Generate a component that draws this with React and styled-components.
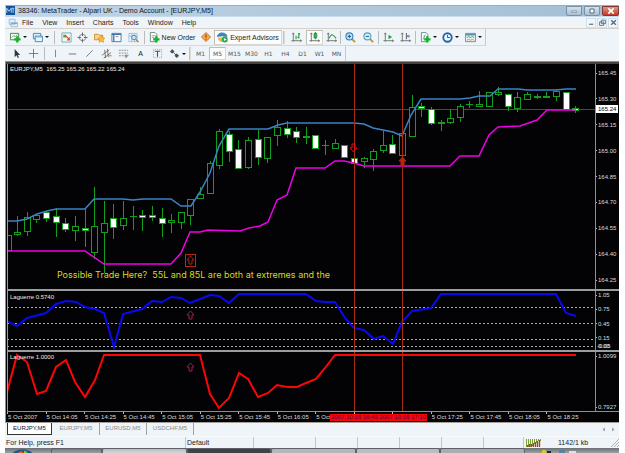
import React from "react";
import styled, { createGlobalStyle, css } from "styled-components";

const sans = `"Liberation Sans", Arial, sans-serif`;

const GlobalStyle = createGlobalStyle`
  * { box-sizing: border-box; }
  html { background: #fdfeff; }
  body { margin: 0; overflow: hidden; font-family: ${sans}; font-size: 7px; color: #1c1c1c; }
  button { font: inherit; color: inherit; border: 0; padding: 0; margin: 0; background: none; }
  a { color: inherit; text-decoration: none; }
  svg { display: block; }
`;

const AppWindow = styled.div`
  margin: 5px 6px 0 5px;
  background: #eff4f8;
`;

const TitleBar = styled.header`
  display: flex;
  align-items: center;
  height: 12px;
  padding-left: 1px;
  gap: 3px;
  background: linear-gradient(90deg, #c3d5e6, #b3cadd 45%, #a3bfd5);
  border-bottom: 1px solid #c6dcee;
  box-shadow: inset 0 1px #98aec1;
`;

const TitleText = styled.h1`
  flex: 1;
  margin: 0;
  font-size: 7px;
  line-height: 10px;
  font-weight: 400;
  white-space: nowrap;
  color: #101820;
`;

const Caption = styled.div`
  display: flex;
  gap: 2px;
`;

const CaptionButton = styled.button`
  display: grid;
  place-items: center;
  width: ${(p) => (p.$close ? 17 : 16)}px;
  height: 10px;
  border: 1px solid ${(p) => (p.$close ? "#7c3a33" : "#7890a4")};
  border-radius: 0 0 2px 2px;
  background: ${(p) => (p.$close ? "linear-gradient(#e0958a, #c43a26)" : "linear-gradient(#d3e1ed, #a9c0d3)")};
`;

const MenuBar = styled.nav`
  display: flex;
  align-items: center;
  height: 12px;
  padding-left: 3px;
  border-bottom: 1px solid #d6d1ca;
`;

const MenuList = styled.div`
  display: flex;
  flex: 1;
  gap: 9px;
  padding-left: 4px;
`;

const MenuItem = styled.button`
  font-size: 7px;
  line-height: 10px;
`;

const MdiControls = styled.div`
  display: flex;
  gap: 1px;
  padding-right: 1px;
`;

const MdiButton = styled.button`
  display: grid;
  place-items: center;
  width: 10px;
  height: 10px;
  border: 1px solid #d3dfe8;
  background: #f3f7fa;
`;

const Toolbar = styled.div`
  display: flex;
  align-items: center;
  width: fit-content;
  height: ${(p) => (p.$slim ? 15 : 17)}px;
  padding-left: 2px;
  border-right: 1px solid #cbc8c2;
  border-bottom: ${(p) => (p.$slim ? 0 : 1)}px solid #dcd8d1;
`;

const ToolButton = styled.button`
  display: flex;
  align-items: center;
  justify-content: center;
  gap: 2px;
  flex: none;
  width: ${(p) => p.$w || 17}px;
  height: ${(p) => (p.$period ? 13 : 15)}px;
  font-size: 7px;
  white-space: nowrap;
  ${(p) =>
    p.$period &&
    css`
      font-family: "DejaVu Sans", sans-serif;
      font-size: 6px;
      color: #55585c;
    `}
  ${(p) =>
    p.$pressed &&
    css`
      background: #fafcfd;
      border: 1px solid;
      border-color: #c0bdb8 #d8d6d2 #d8d6d2 #c0bdb8;
    `}
`;

const Caret = styled.span`
  border: 2px solid transparent;
  border-top-color: #111;
  border-bottom-width: 0;
`;

const Divider = styled.span`
  flex: none;
  width: 1px;
  height: 13px;
  margin: 0 ${(p) => p.$m ?? 2}px;
  background: #b9bcbf;
`;

const Grip = styled.span`
  flex: none;
  width: 2px;
  height: 13px;
  margin: 0 1px;
  border-left: 1px solid #c6c2bb;
  border-right: 1px solid #dedbd6;
`;

const ChartFrame = styled.main`
  background: #030205;
  border: solid #8c8f90;
  border-width: 1px 0 1px 1px;
  border-bottom-color: #a39f98;
  box-shadow: inset 0 2px #45413c;
  padding: 2px 0 0 1px;
`;

const Pane = styled.section`
  display: grid;
  grid-template-columns: minmax(0, 1fr) 24px;
  height: ${(p) => p.$h}px;
  position: relative;
  border-left: 1px solid #9a9c9c;
  border-bottom: ${(p) => (p.$last ? 1 : 2)}px solid ${(p) => (p.$last ? "#8d8f8f" : "#9a9d9d")};
`;

const Plot = styled.svg`
  width: 100%;
  height: 100%;
`;

const Scale = styled.div`
  display: flex;
  flex-direction: column;
  justify-content: space-between;
  border-left: 1px solid #8c8f8f;
  padding: ${(p) => p.$pad || "4px 0"};
  position: relative;
  font: 6px/8px ${sans};
  color: #dcdcdc;
`;

const ScaleValue = styled.span`
  display: flex;
  align-items: center;
  gap: 1px;
  height: 8px;
  &::before {
    content: "";
    width: 1px;
    height: 1px;
    background: #b8b8b8;
  }
`;

const PriceTag = styled.span`
  position: absolute;
  top: 41px;
  left: 0;
  right: 1px;
  padding-left: 2px;
  background: #fff;
  color: #000;
`;

const PaneLabel = styled.span`
  position: absolute;
  top: ${(p) => p.$top || 1}px;
  left: 2px;
  font: 6px/8px ${sans};
  color: #ececec;
  white-space: pre;
`;

const Note = styled.span`
  position: absolute;
  left: 8%;
  top: 205px;
  font: 9px/12px Inter, ${sans};
  color: #d9d916;
  white-space: pre;
`;

const TimeAxis = styled.div`
  display: grid;
  grid-template-columns: repeat(15, minmax(0, 1fr));
  position: relative;
  height: 10px;
  padding-right: 34px;
  font: 6px/9px ${sans};
  color: #dcdcdc;
`;

const TimeTick = styled.span`
  white-space: nowrap;
  padding: 1px 0 0 1px;
  background: linear-gradient(#b8b8b8, #b8b8b8) 0 0 / 1px 2px no-repeat;
`;

const TimeMarks = styled.span`
  position: absolute;
  left: 323px;
  top: 2px;
  display: flex;
  justify-content: space-between;
  width: 97px;
  padding: 0 1px;
  height: 7px;
  line-height: 7px;
  background: #f80505;
  color: #4a0a50;
  white-space: nowrap;
`;

const Tabs = styled.nav`
  display: flex;
  align-items: flex-start;
  height: 14px;
  padding-left: 2px;
  border-bottom: 1px solid #f8fbfd;
  color: #8b8b8b;
`;

const Tab = styled.a`
  width: ${(p) => (p.$active ? 45 : 47)}px;
  height: 12px;
  font: 6px/11px ${sans};
  text-align: center;
  border-right: 1px solid #a3a3a3;
  ${(p) =>
    p.$active &&
    css`
      color: #111;
      background: #fff;
      border: 1px solid #333;
      border-top: 0;
      margin-right: 1px;
    `}
`;

const TabArrows = styled.div`
  display: flex;
  gap: 5px;
  margin-left: auto;
  padding: 4px 3px 0 0;
`;

const StatusBar = styled.footer`
  display: flex;
  height: 11px;
  line-height: 10px;
`;

const StatusCell = styled.span`
  display: flex;
  align-items: center;
  flex: ${(p) => (p.$w ? "none" : "1")};
  width: ${(p) => (p.$w ? `${p.$w}px` : "auto")};
  padding-left: 1px;
  border-left: ${(p) => (p.$w ? 1 : 0)}px solid #c9c6c0;
  white-space: nowrap;
`;

const Traffic = styled.span`
  margin-left: 16px;
  flex: 1;
`;

const Taskbar = styled.div`
  display: flex;
  height: 6px;
  overflow: hidden;
  background: linear-gradient(#6c7073, #a6abae);
`;

const TaskSlot = styled.span`
  flex: ${(p) => p.$f};
  border: 1px solid #5d6163;
  border-radius: 2px 2px 0 0;
  background: ${(p) => p.$bg};
`;

/* ---------- icons ---------- */

const Icon = ({ children, size = 12 }) => (
  <svg width={size} height={size} viewBox="0 0 12 12" fill="none" aria-hidden="true">
    {children}
  </svg>
);

const Plus = ({ x, y }) => (
  <path d={`M${x} ${y - 3.5}v7M${x - 3.5} ${y}h7`} stroke="#17b02a" strokeWidth="2.6" />
);
const Axes = () => <path d="M2.5 1v9.5M0.5 9.5h11M1.5 2.5l1-1.5 1 1.5M10 8.5l1.5 1-1.5 1" stroke="#69706b" />;

const icons = {
  app: (
    <>
      <path d="M0 0h12v12H0z" fill="#12539a" />
      <path d="M1 9V3l3 4 3-4v6M8 3h3M9.500 3v6" stroke="#b9dcf7" strokeWidth="1.2" />
    </>
  ),
  doc: (
    <>
      <path d="M1.500 1.500h7v6h-7zM3.500 5.500h8v5h-8z" fill="#e4f1fb" stroke="#8fb7d6" />
      <path d="M4 6.500h7" stroke="#5f9ccc" />
    </>
  ),
  newChart: (
    <>
      <path d="M.5 1.500h9v7h-9z" fill="#f3faf3" stroke="#4d7d4c" />
      <path d="M2 6l2-2 2 1 2-2" stroke="#5aa257" />
      <Plus x={8} y={8} />
    </>
  ),
  profiles: (
    <>
      <path d="M1.500 1.500h8v6h-8z" fill="#d9ebf8" stroke="#4884b4" />
      <path d="M3.500 4.500h8v6h-8z" fill="#eaf5fc" stroke="#4884b4" />
      <path d="M4 5.500h7" stroke="#79aad0" />
    </>
  ),
  market: (
    <>
      <path d="M1 1h10v10H1z" fill="#f2f7ec" stroke="#79a6bd" />
      <path d="M2.500 3h3v3h-3z" fill="#3fa850" />
      <path d="M5 4l4 4M9 6v2.500H6.500" stroke="#d2502e" strokeWidth="1.400" />
    </>
  ),
  target: (
    <>
      <circle cx="6" cy="6" r="3.500" stroke="#7d868b" />
      <path d="M6 .5v4M6 7.500v4M.5 6h4M7.500 6h4" stroke="#5c6367" />
    </>
  ),
  star: (
    <>
      <path d="M.5 2.500h4l1 1h4v5h-9z" fill="#f7d489" stroke="#c88d2c" />
      <path d="M8 4l1.200 2.400 2.600.4-1.900 1.800.5 2.700L8 10l-2.400 1.300.5-2.700-1.900-1.800 2.600-.4z" fill="#ffbd38" stroke="#cf7d12" strokeWidth=".6" />
    </>
  ),
  terminal: (
    <>
      <path d="M1 1.500h10v9H1z" fill="#f4f9fd" stroke="#437eae" />
      <path d="M1 2.500h10M3 3v7" stroke="#3a78ad" strokeWidth="1.400" />
      <path d="M5 5h3" stroke="#d76f62" />
    </>
  ),
  tester: (
    <>
      <path d="M1 1.500h9v9H1zM1 4.500h9M4 1.500v9M7 1.500v9" fill="#edf5fb" stroke="#8db2cf" strokeWidth=".8" />
      <circle cx="6.500" cy="6" r="2.500" fill="#cfe5f5" stroke="#477faa" />
      <path d="M8.500 8l3 3" stroke="#a8783e" strokeWidth="1.400" />
    </>
  ),
  order: (
    <>
      <path d="M1.500.5h5l2 2v8h-7z" fill="#fafcfa" stroke="#71867b" />
      <path d="M3 4h4M3 6h3" stroke="#8da597" />
      <Plus x={8} y={8} />
    </>
  ),
  meta: (
    <>
      <path d="M6 .5L11.500 6 6 11.500.5 6z" fill="#f5a94a" stroke="#c26b1b" />
      <path d="M6 3v4M6 8v1.300" stroke="#8c3d0e" strokeWidth="1.300" />
    </>
  ),
  expert: (
    <>
      <path d="M1 6c0 3 2 5 5 5l1-5z" fill="#f0b84c" />
      <path d="M0 5c1-3 4-4.500 6-4 3 0 5 2 5 4-3-1-7-1-11 0z" fill="#3f8ac4" stroke="#286a9f" strokeWidth=".6" />
      <circle cx="8.500" cy="8.200" r="3.200" fill="#24a843" />
      <path d="M7.500 6.500l3 1.700-3 1.700z" fill="#fff" />
    </>
  ),
  bars: (
    <>
      <Axes />
      <path d="M5.500 4v4M8.500 1v6M7 6h1.500M8.500 2H10" stroke="#249a35" strokeWidth="1.200" />
    </>
  ),
  candles: (
    <>
      <Axes />
      <path d="M7 0v8" stroke="#238730" />
      <path d="M5.500 1.500h3v5h-3z" fill="#2cbc42" stroke="#238730" strokeWidth=".8" />
    </>
  ),
  line: (
    <>
      <Axes />
      <path d="M3 7l3-4c2 0 3 1 5 4" stroke="#32a043" strokeWidth="1.200" />
    </>
  ),
  zoomIn: (
    <>
      <path d="M7.500 7.500l3.500 3.500" stroke="#c29335" strokeWidth="2" />
      <circle cx="4.800" cy="4.800" r="3.800" fill="#c9e5f7" stroke="#3a85bb" strokeWidth="1.200" />
      <path d="M3 4.800h3.600M4.800 3v3.600" stroke="#206a9f" strokeWidth="1.200" />
    </>
  ),
  zoomOut: (
    <>
      <path d="M7.500 7.500l3.500 3.500" stroke="#c29335" strokeWidth="2" />
      <circle cx="4.800" cy="4.800" r="3.800" fill="#d9edf8" stroke="#58a0b8" strokeWidth="1.200" />
      <path d="M3 4.800h3.600" stroke="#206a9f" strokeWidth="1.200" />
    </>
  ),
  scroll: (
    <>
      <Axes />
      <path d="M6 3l4 2.500L6 8z" fill="#25a13a" />
    </>
  ),
  shift: (
    <>
      <Axes />
      <path d="M7 1v7" stroke="#48739f" strokeWidth="1.200" />
      <path d="M11 4.500H8M9.500 3L8 4.500 9.500 6" stroke="#be4428" />
    </>
  ),
  indicators: (
    <>
      <path d="M1.500.5h5l2 2v8h-7z" fill="#f4f9fa" stroke="#6d8b8d" />
      <path d="M3 8c2 0 1-5 3-5" stroke="#4a8c98" />
      <Plus x={8} y={8} />
    </>
  ),
  clock: (
    <>
      <circle cx="6" cy="6" r="4.600" fill="#eaf5fc" stroke="#2168aa" strokeWidth="2" />
      <path d="M6 3.500V6h2.500" stroke="#35414a" />
    </>
  ),
  template: (
    <>
      <path d="M.5 1.500h11v9H.5z" fill="#eaf4f8" stroke="#5790ad" />
      <path d="M1 3h10" stroke="#5790ad" strokeWidth="1.600" />
      <path d="M2 6l2-1 2 1 2-1 2 1" stroke="#37a053" />
      <path d="M2 9l2-1 2 1 2-1 2 1" stroke="#c98d4b" />
    </>
  ),
  cursor: <path d="M4 1v9l2-2 1.500 3 1.200-.7L7.300 7.500H10z" fill="#34383a" />,
  cross: <path d="M6 1v10M1 6h10" stroke="#63686a" strokeWidth=".9" />,
  vline: <path d="M6 2v8" stroke="#7b7d7f" />,
  hline: <path d="M2 6.500h8" stroke="#6b6d6f" />,
  trend: <path d="M2.500 9.500l7-7" stroke="#777a7c" />,
  channel: <path d="M1 8l8-6M3 11l8-6M4 2l1 9M7 1l1 9M9 8.500h2.500" stroke="#6a5f57" strokeWidth=".9" />,
  fibo: (
    <>
      <path d="M1 2.500h10M1 5.500h10M1 8.500h7" stroke="#84888b" strokeDasharray="2 1" />
      <path d="M8.500 7v4M8.500 8h3M8.500 9.500h2" stroke="#7b5a49" strokeWidth=".8" />
    </>
  ),
  label: (
    <>
      <path d="M1.500 1.500h9v9h-9z" stroke="#a0a3a5" strokeDasharray="1 1" />
      <path d="M3 3.500h6M6 3.500v6" stroke="#505356" strokeWidth="1.200" />
    </>
  ),
  arrows: (
    <>
      <path d="M1 4l2.500-3L6 4 3.500 6z" fill="#4c4f51" />
      <path d="M5 5l4 4" stroke="#4c4f51" />
      <path d="M6 8.500L8.500 6 11 8.500 8.500 11z" fill="#4c4f51" />
    </>
  ),
};

const Tool = ({ icon, name, caret, size, children, ...rest }) => (
  <ToolButton aria-label={name} {...rest}>
    {icon && <Icon size={size || 11}>{icons[icon]}</Icon>}
    {children}
    {caret && <Caret />}
  </ToolButton>
);

/* ---------- chart data (canvas units) ---------- */

// [high, body top, body bottom, low, 1 = falling candle]
const candles = [
  [235, 235, 250, 250], [216, 232, 234, 236], [212, 217, 231, 236], [214, 215, 219, 223],
  [211, 212, 218, 222, 1], [208, 216, 222, 237, 1], [218, 223, 229, 232, 1], [216, 226, 230, 241],
  [209, 228, 230, 247, 1], [187, 226, 252, 259], [201, 223, 232, 273], [204, 218, 227, 239, 1],
  [201, 218, 225, 230], [206, 216, 216, 230], [210, 215, 217, 231, 1], [206, 215, 217, 221, 1],
  [208, 218, 223, 237, 1], [214, 220, 222, 233], [212, 212, 222, 229], [199, 199, 215, 225],
  [187, 194, 198, 199], [161, 163, 193, 194], [129, 131, 165, 169], [131, 134, 151, 162, 1],
  [140, 149, 168, 168, 1], [137, 140, 167, 169], [130, 139, 157, 165, 1], [137, 137, 158, 163],
  [120, 127, 135, 146], [121, 128, 134, 138, 1], [127, 131, 137, 143, 1], [127, 136, 137, 144, 1],
  [135, 135, 148, 148, 1], [140, 145, 145, 155], [139, 143, 148, 148], [145, 145, 157, 157, 1],
  [157, 158, 163, 163, 1], [157, 158, 161, 168], [149, 151, 159, 171], [131, 145, 150, 153],
  [135, 144, 153, 153, 1], [133, 133, 155, 155], [95, 107, 136, 136], [103, 106, 108, 117, 1],
  [107, 109, 123, 125, 1], [120, 122, 123, 131, 1], [109, 118, 122, 124], [104, 106, 117, 122],
  [101, 104, 104, 108], [91, 104, 106, 106], [92, 92, 106, 107], [87, 92, 94, 96],
  [94, 94, 106, 111, 1], [92, 97, 108, 112], [92, 94, 99, 99], [94, 96, 97, 99, 1],
  [92, 96, 97, 97, 1], [89, 91, 96, 101], [92, 92, 109, 110, 1], [106, 108, 110, 113, 1],
];

const upperBand =
  "7,221 17,221 27,219 37,214 47,211 56,209 85,209 94,199 123,199 133,200 143,199 171,199 181,206 191,206 200,192 210,173 219,146 229,129 268,129 278,125 287,123 354,123 364,124 373,128 383,130 393,132 402,136 411,115 421,99 460,99 470,98 479,96 490,96 498,89 518,89 528,90 556,90 566,89 576,89";
const lowerBand =
  "7,251 85,251 104,264 171,264 181,253 190,232 200,232 208,230 240,231 249,228 260,226 268,222 277,200 287,195 296,168 325,168 335,161 344,161 354,163 364,166 450,166 460,156 479,156 489,135 498,127 520,126 537,120 547,110 576,110";
const laguerreFast =
  "7,321 17,326 27,318 46,313 56,304 66,301 76,302 85,307 95,309 104,313 114,347 123,314 142,309 152,301 162,302 171,297 181,298 190,303 200,299 210,295 219,296 229,303 239,294 306,294 316,301 325,302 335,302 345,318 354,328 364,330 374,339 383,336 393,344 402,322 412,311 431,308 441,294 556,294 566,313 576,316";
const laguerreSlow =
  "7,392 17,355 27,362 37,394 46,391 56,367 66,360 75,382 85,397 95,380 104,355 200,355 210,394 219,408 229,398 239,373 248,379 258,397 268,393 277,385 287,387 297,387 306,383 316,379 325,368 335,355 576,355";

const Candle = ({ i, data: [high, top, bottom, low, down] }) => {
  const x = Math.round(7.6 + 9.62 * i);
  const h = bottom - top;
  return (
    <g stroke="#10a01a" strokeWidth="1">
      <path d={`M${x + 0.5} ${high}V${top}M${x + 0.5} ${bottom}V${low}`} />
      {h === 0 ? (
        <path d={`M${x - 3} ${top + 0.5}h7`} />
      ) : (
        <rect x={x - 2.5} y={top + 0.5} width="6" height={h} fill={down ? "#fff" : "#030205"} />
      )}
    </g>
  );
};

const VerticalMarks = () => (
  <path d="M354.500 60V420M402.500 60V420" stroke="#a82a12" vectorEffect="non-scaling-stroke" />
);

const Arrow = ({ x, y, down, color = "#a01c4c", fill = "none" }) => (
  <path
    d={down ? `M${x - 1} ${y - 4}h3v4h2l-3.500 4-3.500-4h2z` : `M${x - 1} ${y + 4}h3v-4h2l-3.500-4-3.500 4h2z`}
    stroke={color}
    fill={fill}
  />
);

const PlotArea = ({ top, height, children }) => (
  <Plot viewBox={`8 ${top} 587 ${height}`} preserveAspectRatio="none" fill="none">
    {children}
  </Plot>
);

const prices = ["165.45", "165.30", "165.15", "165.00", "164.85", "164.70", "164.55", "164.40", "164.25"];
// ticks 8 to 10 sit behind the marked times, only the date fits beside them
const times = [
  "5 Oct 2007", "5 Oct 14:05", "5 Oct 14:25", "5 Oct 14:45", "5 Oct 15:05", "5 Oct 15:25", "5 Oct 15:45",
  "5 Oct 16:05", "5 Oct", "", "", "5 Oct 17:25", "5 Oct 17:45", "5 Oct 18:05", "5 Oct 18:25",
];
const menus = ["File", "View", "Insert", "Charts", "Tools", "Window", "Help"];
const periods = ["M1", "M5", "M15", "M30", "H1", "H4", "D1", "W1", "MN"];

const Stacked = styled.span`
  position: absolute;
  bottom: 0;
  left: ${(p) => p.$x}px;
`;

const Chart = () => (
  <ChartFrame>
    <Pane $h={227}>
      <PlotArea top={64} height={225}>
        <path d="M7 109.500H595" stroke="#38504c" />
        {candles.map((c, i) => (
          <Candle key={i} i={i} data={c} />
        ))}
        <polyline points={upperBand} stroke="#3c84c4" strokeWidth="1.500" />
        <polyline points={lowerBand} stroke="#f000e8" strokeWidth="1.500" />
        <VerticalMarks />
        <Arrow x={353} y={148} down color="#e01020" />
        <Arrow x={402} y={161} color="#c02010" fill="#c02010" />
        <rect x="185.500" y="254.500" width="10" height="12" stroke="#b02a14" />
        <Arrow x={190} y={260} color="#a82418" />
      </PlotArea>
      <Scale $pad="5px 0">
        {prices.map((p) => (
          <ScaleValue key={p}>{p}</ScaleValue>
        ))}
        <PriceTag>165.24</PriceTag>
      </Scale>
      <PaneLabel>EURJPY,M5  165.25 165.26 165.22 165.24</PaneLabel>
      <Note>Possible Trade Here?  55L and 85L are both at extremes and the</Note>
    </Pane>
    <Pane $h={61}>
      <PlotArea top={291} height={59}>
        <path d="M7 307.500H595M7 323.500H595M7 339.500H595M7 346.500H595" stroke="#a8aaa6" strokeDasharray="2 2" />
        <polyline points={laguerreFast} stroke="#0808f4" strokeWidth="2" />
        <VerticalMarks />
        <Arrow x={190} y={315} />
      </PlotArea>
      <Scale $pad="0 0 8px">
        <ScaleValue>1.05</ScaleValue>
        <ScaleValue>0.75</ScaleValue>
        <ScaleValue>0.45</ScaleValue>
        <ScaleValue>0.15</ScaleValue>
        <Stacked $x={2}>0.00</Stacked>
        <Stacked $x={1}>-0.05</Stacked>
      </Scale>
      <PaneLabel $top={2}>Laguerre 0.5740</PaneLabel>
    </Pane>
    <Pane $h={60} $last>
      <PlotArea top={352} height={59}>
        <polyline points={laguerreSlow} stroke="#fa0606" strokeWidth="2" />
        <VerticalMarks />
        <Arrow x={190} y={367} />
      </PlotArea>
      <Scale $pad="0">
        <ScaleValue>1.0099</ScaleValue>
        <ScaleValue>0.7927</ScaleValue>
      </Scale>
      <PaneLabel $top={1}>Laguerre 1.0000</PaneLabel>
    </Pane>
    <TimeAxis>
      {times.map((t, i) => (
        <TimeTick key={i}>{t}</TimeTick>
      ))}
      <TimeMarks>
        <span>2007.10.05 16:45</span>
        <span>2007.10.05 17:10</span>
      </TimeMarks>
    </TimeAxis>
  </ChartFrame>
);

export default function App() {
  return (
    <>
      <GlobalStyle />
      <AppWindow>
        <TitleBar>
          <Icon size={9}>{icons.app}</Icon>
          <TitleText>38346: MetaTrader - Alpari UK - Demo Account - [EURJPY,M5]</TitleText>
          <Caption>
            <CaptionButton aria-label="Minimize">
              <Icon size={8}><path d="M2 6h8v2H2z" fill="#fff" stroke="#56687a" strokeWidth=".8" /></Icon>
            </CaptionButton>
            <CaptionButton aria-label="Maximize">
              <Icon size={8}><path d="M3 3h6v6H3z" fill="#fff" stroke="#56687a" strokeWidth="1.500" /></Icon>
            </CaptionButton>
            <CaptionButton $close aria-label="Close">
              <Icon size={8}><path d="M2 2l8 8M10 2l-8 8" stroke="#fff" strokeWidth="2.600" /></Icon>
            </CaptionButton>
          </Caption>
        </TitleBar>
        <MenuBar>
          <Icon size={10}>{icons.doc}</Icon>
          <MenuList>
            {menus.map((m) => (
              <MenuItem key={m}>{m}</MenuItem>
            ))}
          </MenuList>
          <MdiControls>
            <MdiButton aria-label="Minimize chart">
              <Icon size={7}><path d="M2 9h7" stroke="#45708f" strokeWidth="2" /></Icon>
            </MdiButton>
            <MdiButton aria-label="Restore chart">
              <Icon size={7}><path d="M4 2h7v6H4zM1 5h7v6H1z" stroke="#45708f" strokeWidth="1.500" /></Icon>
            </MdiButton>
            <MdiButton aria-label="Close chart">
              <Icon size={7}><path d="M2 2l8 8M10 2l-8 8" stroke="#45708f" strokeWidth="2.400" /></Icon>
            </MdiButton>
          </MdiControls>
        </MenuBar>

        <Toolbar>
          <Tool icon="newChart" name="New chart" caret $w={22} />
          <Tool icon="profiles" name="Profiles" caret $w={22} />
          <Divider $m={3} />
          <Tool icon="market" name="Market watch" $w={16} />
          <Tool icon="target" name="Data window" />
          <Tool icon="star" name="Navigator" />
          <Tool icon="terminal" name="Terminal" />
          <Tool icon="tester" name="Strategy tester" />
          <Divider />
          <Tool icon="order" $w={50}>New Order</Tool>
          <Tool icon="meta" name="MetaEditor" size={10} />
          <Tool icon="expert" $pressed $w={68}>Expert Advisors</Tool>
          <Grip />
          <Tool icon="bars" name="Bar chart" $w={20} />
          <Tool icon="candles" name="Candlesticks" $pressed />
          <Tool icon="line" name="Line chart" />
          <Divider $m={0} />
          <Tool icon="zoomIn" name="Zoom in" $w={19} />
          <Tool icon="zoomOut" name="Zoom out" />
          <Divider $m={1} />
          <Tool icon="scroll" name="Auto scroll" />
          <Tool icon="shift" name="Chart shift" />
          <Divider $m={1} />
          <Tool icon="indicators" name="Indicators" caret $w={22} />
          <Tool icon="clock" name="Periods" caret $w={22} />
          <Tool icon="template" name="Templates" caret $w={24} />
        </Toolbar>

        <Toolbar $slim>
          <Tool icon="cursor" name="Cursor" $w={18} />
          <Tool icon="cross" name="Crosshair" />
          <Divider />
          <Tool icon="vline" name="Vertical line" />
          <Tool icon="hline" name="Horizontal line" />
          <Tool icon="trend" name="Trendline" />
          <Tool icon="channel" name="Channel" />
          <Tool icon="fibo" name="Fibonacci" />
          <Tool name="Text">A</Tool>
          <Tool icon="label" name="Text label" />
          <Tool icon="arrows" name="Arrows" caret $w={22} />
          <Grip />
          {periods.map((p) => (
            <Tool key={p} $period $pressed={p === "M5"}>{p}</Tool>
          ))}
        </Toolbar>

        <Chart />

        <Tabs>
          <Tab href="#eurjpy" $active>EURJPY,M5</Tab>
          <Tab href="#eurjpy-2">EURJPY,M5</Tab>
          <Tab href="#eurusd">EURUSD,M5</Tab>
          <Tab href="#usdchf">USDCHF,M5</Tab>
          <TabArrows>
            <Icon size={5}><path d="M9 1L4 6l5 5z" fill="#8e8e8e" /></Icon>
            <Icon size={5}><path d="M3 1l5 5-5 5z" fill="#8e8e8e" /></Icon>
          </TabArrows>
        </Tabs>
        <StatusBar>
          <StatusCell>For Help, press F1</StatusCell>
          <StatusCell $w={68}>Default</StatusCell>
          <StatusCell $w={62} />
          <StatusCell $w={42} />
          <StatusCell $w={42} />
          <StatusCell $w={42} />
          <StatusCell $w={42} />
          <StatusCell $w={40} />
          <StatusCell $w={96}>
            <svg width="17" height="8" viewBox="0 0 17 8">
              <path d="M1.500 0v8M3.500 0v8M5.500 0v8M7.500 0v7M9.500 0v5M11.500 0v4M13.500 0v2M15.500 0v2" stroke="#7ba13c" />
              <path d="M2.500 6v2M4.500 5v3M6.500 5v3M8.500 4v4M10.500 3v5M12.500 2v6M14.500 1v7" stroke="#b53a22" strokeWidth="1.300" />
            </svg>
            <Traffic>1142/1 kb</Traffic>
            <svg width="8" height="9" viewBox="0 0 8 9">
              <path d="M0 9l8-8M3 9l5-5M6 9l2-2" stroke="#aeb2b5" />
            </svg>
          </StatusCell>
        </StatusBar>
        <Taskbar>
          <svg width="46" height="6" viewBox="0 0 46 6">
            <path d="M7 6C10 0 25 0 28 6z" fill="#23558c" />
            <path d="M12 6q3-4 6-2v2z" fill="#e2622c" />
            <path d="M19 6V3q2-1 4 3z" fill="#8cc04a" />
          </svg>
          <TaskSlot $f={50} $bg="transparent" />
          <TaskSlot $f={84} $bg="linear-gradient(#b9bdbf, #d4d6d7)" />
          <TaskSlot $f={84} $bg="#3f4345" />
          <TaskSlot $f={84} $bg="#b4b7b9" />
          <TaskSlot $f={84} $bg="#b9bdbf" />
          <TaskSlot $f={84} $bg="#a9adaf" />
          <svg width="94" height="6" viewBox="0 0 94 6">
            <path d="M17 2h4v4h-4z" fill="#e4c22e" />
            <path d="M22 3h4v3h-4z" fill="#25292b" />
            <path d="M34 2h6v4h-6z" fill="#5884a4" />
            <path d="M44 3h7v3h-7z" fill="#dfe3e5" />
          </svg>
        </Taskbar>
      </AppWindow>
    </>
  );
}
